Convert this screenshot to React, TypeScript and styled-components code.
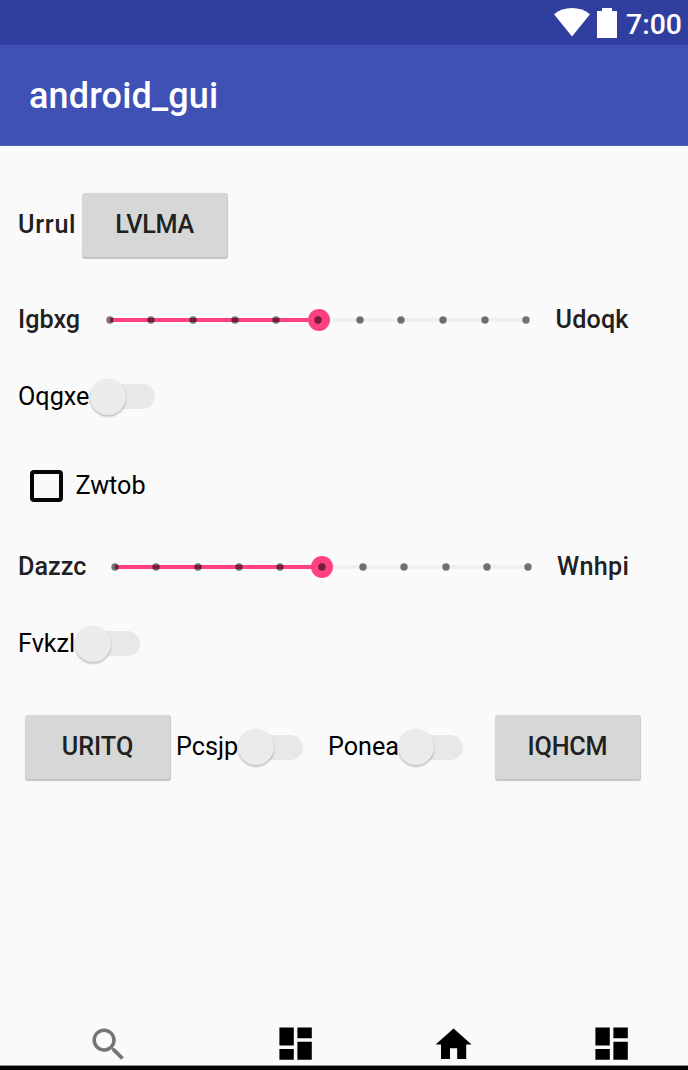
import React from "react";
import styled, { createGlobalStyle } from "styled-components";

const Global = createGlobalStyle`
  * { box-sizing: border-box; }
  body { margin: 0; background: #fafafa; font-family: Roboto, "Liberation Sans", sans-serif; }
`;

const Screen = styled.div`
  width: 688px;
  height: 1070px;
  display: flex;
  flex-direction: column;
  overflow: hidden;
  background: #fafafa;
`;

const StatusBar = styled.header`
  height: 45px;
  flex: none;
  display: flex;
  align-items: center;
  justify-content: flex-end;
  padding-right: 6px;
  background: #303f9f;
  color: #fff;
`;

const StatusIcon = styled.svg<{ $gap: number }>`
  flex: none;
  display: block;
  margin-right: ${(p) => p.$gap}px;
`;

const Clock = styled.span`
  font-size: 28.4px;
  font-weight: 500;
  line-height: 34px;
  padding-top: 4px;
`;

const AppBar = styled.div`
  height: 101px;
  flex: none;
  display: flex;
  align-items: center;
  padding: 2px 0 0 29px;
  background: #3f51b5;
  border-bottom: 1px solid #5262bc;
`;

const Title = styled.h1`
  margin: 0;
  font-size: 36px;
  font-weight: 500;
  line-height: 42px;
  letter-spacing: 0.15px;
  color: #fff;
`;

const Content = styled.main`
  flex: 1;
  display: flex;
  flex-direction: column;
  padding-left: 18px;
`;

const Row = styled.div<{ $top: number; $height: number }>`
  display: flex;
  align-items: center;
  flex: none;
  margin-top: ${(p) => p.$top}px;
  height: ${(p) => p.$height}px;
`;

const Label = styled.span<{ $width: number; $medium?: boolean; $shift?: number; $tracking?: number }>`
  flex: none;
  width: ${(p) => p.$width}px;
  font-size: 25.2px;
  line-height: 30px;
  margin-top: ${(p) => p.$shift ?? 0}px;
  letter-spacing: ${(p) => p.$tracking ?? 0}px;
  white-space: nowrap;
  font-weight: ${(p) => (p.$medium ? 500 : 400)};
  color: ${(p) => (p.$medium ? "#212121" : "#000")};
`;

const Button = styled.button<{ $left?: number; $right?: number; $top?: number; $tracking?: number }>`
  flex: none;
  width: 146px;
  height: 66px;
  margin: ${(p) => p.$top ?? 0}px ${(p) => p.$right ?? 0}px 0 ${(p) => p.$left ?? 0}px;
  padding: 0 1px 3px 0;
  border: 0;
  border-radius: 4px;
  background: #d6d8d7;
  box-shadow: inset 0 -2px 0 #c6c8c7, inset -1px 0 0 #cccecd, 0 0 1px #d0d0d0;
  font: 500 25.2px/30px Roboto, "Liberation Sans", sans-serif;
  letter-spacing: ${(p) => p.$tracking ?? 0}px;
  color: #212121;
`;

const SwitchTrack = styled.span<{ $right?: number }>`
  flex: none;
  display: flex;
  align-items: center;
  width: 65px;
  height: 25px;
  margin-right: ${(p) => p.$right ?? 0}px;
  border-radius: 13px;
  background: #e8e8e8;
`;

const SwitchThumb = styled.span`
  flex: none;
  width: 36px;
  height: 36px;
  border-radius: 50%;
  background: #ebebeb;
  box-shadow: 0 2px 2px rgba(0, 0, 0, 0.2), 0 0 2px rgba(0, 0, 0, 0.08);
`;

const SliderBox = styled.div<{ $left: number; $width: number; $right: number }>`
  position: relative;
  flex: none;
  display: flex;
  align-items: center;
  justify-content: space-between;
  width: ${(p) => p.$width}px;
  height: 22px;
  margin: 0 ${(p) => p.$right}px 0 ${(p) => p.$left}px;
  background: linear-gradient(#f0f0f0, #f0f0f0) 4px 50% / calc(100% - 8px) 4px no-repeat;
`;

const SliderFill = styled.span`
  position: absolute;
  left: 4px;
  top: 9px;
  width: calc(50% - 4px);
  height: 4px;
  background: #ff4081;
`;

const SliderThumb = styled.span`
  position: absolute;
  left: calc(50% - 10.5px);
  top: 0;
  width: 22px;
  height: 22px;
  border-radius: 50%;
  background: #ff4081;
`;

const Tick = styled.svg`
  position: relative;
  flex: none;
  width: 8px;
  height: 8px;
  margin: 0 -0.3px;
  fill: rgba(0, 0, 0, 0.54);
`;

const CheckBox = styled.span`
  flex: none;
  width: 32.6px;
  height: 32px;
  margin: 0 12.4px 0 12.4px;
  border: 4px solid #060606;
  border-radius: 4px;
`;

const BottomBar = styled.nav`
  flex: none;
  display: flex;
  align-items: flex-start;
  height: 48px;
  padding: 0.6px 0 0 86.8px;
  background: linear-gradient(#8c8c8c 1px, #000 1px) 0 100% / 100% 5px no-repeat;
`;

const NavIcon = styled.svg<{ $gap?: number; $lift?: number }>`
  flex: none;
  display: block;
  width: 43.2px;
  height: 43.2px;
  margin-top: ${(p) => -(p.$lift ?? 0)}px;
  margin-right: ${(p) => p.$gap ?? 0}px;
`;

function Slider(props: { left: number; width: number; right: number }) {
  return (
    <SliderBox $left={props.left} $width={props.width} $right={props.right}>
      <SliderFill />
      <SliderThumb />
      {Array.from({ length: 11 }, (_, i) => (
        <Tick key={i} viewBox="0 0 8 8">
          <circle cx="4" cy="4" r="3.7" />
        </Tick>
      ))}
    </SliderBox>
  );
}

function Switch({ right }: { right?: number }) {
  return (
    <SwitchTrack $right={right}>
      <SwitchThumb />
    </SwitchTrack>
  );
}

function DashboardIcon({ gap }: { gap?: number }) {
  return (
    <NavIcon $gap={gap} $lift={0.6} viewBox="0 0 24 24" fill="#000">
      <path d="M3 13h8V3H3v10zm0 8h8v-6H3v6zm10 0h8V11h-8v10zm0-18v6h8V3h-8z" />
    </NavIcon>
  );
}

export default function App() {
  return (
    <Screen>
      <Global />
      <StatusBar>
        <StatusIcon $gap={7} width="36" height="29" viewBox="0 0 36 29" fill="#fff">
          <path d="M0 6.2C5 2.2 11 0 18 0s13 2.2 18 6.2L18 28.4z" />
        </StatusIcon>
        <StatusIcon $gap={9.6} width="20" height="30" viewBox="0 0 20 30" fill="#fff">
          <path d="M5 0h10v3h5v27H0V3h5z" />
        </StatusIcon>
        <Clock>7:00</Clock>
      </StatusBar>
      <AppBar>
        <Title>android_gui</Title>
      </AppBar>
      <Content>
        <Row $top={40} $height={80}>
          <Label $width={64} $shift={-2} $tracking={0.7} $medium>Urrul</Label>
          <Button $tracking={-0.3}>LVLMA</Button>
        </Row>
        <Row $top={24} $height={60}>
          <Label $width={62} $medium>Igbxg</Label>
          <Slider left={26} width={424} right={25.5} />
          <Label $width={80} $tracking={0.15} $medium>Udoqk</Label>
        </Row>
        <Row $top={17} $height={59}>
          <Label $width={72} $shift={1}>Oqgxe</Label>
          <Switch />
        </Row>
        <Row $top={31} $height={58}>
          <CheckBox />
          <Label $width={80}>Zwtob</Label>
        </Row>
        <Row $top={21} $height={62}>
          <Label $width={69} $shift={-1} $medium>Dazzc</Label>
          <Slider left={24.4} width={420.6} right={25} />
          <Label $width={80} $shift={-1} $tracking={0.3} $medium>Wnhpi</Label>
        </Row>
        <Row $top={15} $height={61}>
          <Label $width={57} $shift={1}>Fvkzl</Label>
          <Switch />
        </Row>
        <Row $top={33} $height={80}>
          <Button $left={7} $right={5} $top={2}>URITQ</Button>
          <Label $width={62}>Pcsjp</Label>
          <Switch right={25} />
          <Label $width={70}>Ponea</Label>
          <Switch right={32} />
          <Button $top={2} $tracking={-0.2}>IQHCM</Button>
        </Row>
      </Content>
      <BottomBar>
        <NavIcon $gap={143.8} viewBox="0 0 24 24" fill="#757575">
          <path d="M15.5 14h-.79l-.28-.27C15.41 12.59 16 11.11 16 9.5 16 5.91 13.09 3 9.5 3S3 5.91 3 9.5 5.91 16 9.5 16c1.61 0 3.09-.59 4.23-1.57l.27.28v.79l5 4.99L20.49 19l-4.99-5zm-6 0C7.01 14 5 11.99 5 9.5S7.01 5 9.5 5 14 7.01 14 9.5 11.99 14 9.5 14z" />
        </NavIcon>
        <DashboardIcon gap={115} />
        <NavIcon $gap={114.8} viewBox="0 0 24 24" fill="#000">
          <path d="M10 20v-6h4v6h5v-8h3L12 3 2 12h3v8z" />
        </NavIcon>
        <DashboardIcon />
      </BottomBar>
    </Screen>
  );
}
